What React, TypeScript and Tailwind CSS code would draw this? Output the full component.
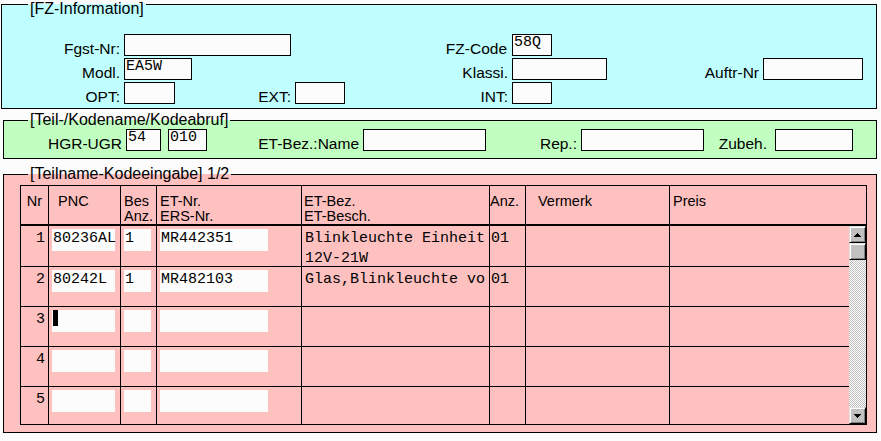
import type { ReactNode } from "react";

const SANS = "font-['Liberation_Sans',Arial,sans-serif]";
const MONO = "font-['Liberation_Mono','Courier_New',monospace]";
const COLS = "grid grid-cols-[27px_72px_36px_145px_188px_36px_144px_197px]";

const Label = ({ w, children, pr = "pr-[4px]" }: { w: string; children: ReactNode; pr?: string }) => (
  <div className={`${w} ${pr} shrink-0 text-right text-[15.5px] leading-none whitespace-nowrap`}>{children}</div>
);

const Box = ({ w, children }: { w: string; children?: ReactNode }) => (
  <div className={`${w} h-[22px] shrink-0 border border-black bg-[#fcfcfc] pl-[1px] ${MONO} text-[15px] leading-[16px]`}>
    {children}
  </div>
);

const Arrow = ({ down }: { down?: boolean }) => (
  <svg width="7" height="4" viewBox="0 0 7 4" shapeRendering="crispEdges">
    <polygon points={down ? "0,0 7,0 3.5,4" : "3.5,0 7,4 0,4"} fill="#000" />
  </svg>
);

const ScrollButton = ({ children }: { children?: ReactNode }) => (
  <div className="h-[17px] shrink-0 flex items-center justify-center bg-[#c0c0c0] border border-t-[#e0e0e0] border-l-[#e0e0e0] border-r-black border-b-black shadow-[inset_1px_1px_0_#ffffff,inset_-1px_-1px_0_#808080]">
    {children}
  </div>
);

const rows = [
  { nr: 1, pnc: "80236AL", bes: "1", et: "MR442351", bez: ["Blinkleuchte Einheit", "12V-21W"], anz: "01", h: "h-[41px] border-b" },
  { nr: 2, pnc: "80242L", bes: "1", et: "MR482103", bez: ["Glas,Blinkleuchte vo"], anz: "01", h: "h-[40px] border-b" },
  { nr: 3, caret: true, h: "h-[40px] border-b" },
  { nr: 4, h: "h-[40px] border-b" },
  { nr: 5, h: "h-[37px]" },
];

const Input = ({ w, children }: { w: string; children?: ReactNode }) => (
  <div className={`${w} h-[22px] mt-[3px] bg-[#fcfcfc] pl-[1px] ${MONO} text-[15px] leading-[20px] whitespace-nowrap`}>
    {children}
  </div>
);

export default function App() {
  return (
    <div className={`w-[881px] h-[441px] overflow-hidden bg-[#fcfcfc] pt-[4px] text-black ${SANS}`}>
      {/* FZ-Information */}
      <div className="relative ml-[1px] w-[876px] h-[105px] border border-black bg-[#c0ffff] pt-[29px] flex flex-col gap-[2px]">
        <span className="absolute left-[26px] top-[-4px] px-[2px] text-[16px] leading-none bg-[linear-gradient(to_bottom,#fcfcfc_3px,#c0ffff_3px)]">
          [FZ-Information]
        </span>
        <div className="flex items-end h-[22px]">
          <Label w="w-[122px]">Fgst-Nr:</Label>
          <Box w="w-[167px]" />
          <Label w="w-[221px]" pr="pr-[5px]">FZ-Code</Label>
          <Box w="w-[40px]">58Q</Box>
        </div>
        <div className="flex items-end h-[22px]">
          <Label w="w-[122px]">Modl.</Label>
          <Box w="w-[68px]">EA5W</Box>
          <Label w="w-[320px]">Klassi.</Label>
          <Box w="w-[95px]" />
          <Label w="w-[156px]">Auftr-Nr</Label>
          <Box w="w-[100px]" />
        </div>
        <div className="flex items-end h-[22px]">
          <Label w="w-[122px]">OPT:</Label>
          <Box w="w-[51px]" />
          <Label w="w-[120px]">EXT:</Label>
          <Box w="w-[50px]" />
          <Label w="w-[167px]">INT:</Label>
          <Box w="w-[40px]" />
        </div>
      </div>

      {/* Teil-/Kodename/Kodeabruf */}
      <div className="relative ml-[3px] mt-[11px] w-[874px] h-[39px] border border-black bg-[#c0ffc0] pt-[8px]">
        <span className="absolute left-[24px] top-[-9px] px-[2px] text-[16px] leading-none bg-[linear-gradient(to_bottom,#fcfcfc_8px,#c0ffc0_8px)]">
          [Teil-/Kodename/Kodeabruf]
        </span>
        <div className="flex items-end h-[22px]">
          <Label w="w-[122px]">HGR-UGR</Label>
          <Box w="w-[35px]">54</Box>
          <div className="w-[7px] shrink-0" />
          <Box w="w-[39px]">010</Box>
          <Label w="w-[156px]">ET-Bez.:Name</Label>
          <Box w="w-[123px]" />
          <Label w="w-[95px]">Rep.:</Label>
          <Box w="w-[123px]" />
          <Label w="w-[71px]" pr="pr-[8px]">Zubeh.</Label>
          <Box w="w-[78px]" />
        </div>
      </div>

      {/* Teilname-Kodeeingabe */}
      <div className="relative ml-[3px] mt-[15px] w-[874px] h-[259px] border border-black bg-[#ffc0c0] pt-[10px] pl-[16px]">
        <span className="absolute left-[24px] top-[-9px] px-[2px] text-[16px] leading-none bg-[linear-gradient(to_bottom,#fcfcfc_8px,#ffc0c0_8px)]">
          [Teilname-Kodeeingabe] 1/2
        </span>
        <div className="relative w-[847px] border border-black">
          <div className={`${COLS} h-[40px] border-b-2 border-black text-[14.5px] leading-[15px]`}>
            <div className="pt-[8px] text-center">Nr</div>
            <div className="border-l border-black pt-[8px] pl-[9px]">PNC</div>
            <div className="border-l border-black pt-[8px] pl-[3px]">Bes<br />Anz.</div>
            <div className="border-l border-black pt-[8px] pl-[3px]">ET-Nr.<br />ERS-Nr.</div>
            <div className="border-l border-black pt-[8px] pl-[2px]">ET-Bez.<br />ET-Besch.</div>
            <div className="border-l border-black pt-[8px]">Anz.</div>
            <div className="border-l border-black pt-[8px] pl-[12px]">Vermerk</div>
            <div className="border-l border-black pt-[8px] pl-[3px]">Preis</div>
          </div>
          {rows.map((r) => (
            <div key={r.nr} className={`${COLS} ${r.h} border-black ${MONO} text-[15px] leading-[20px]`}>
              <div className="pt-[3px] pr-[3px] text-right">{r.nr}</div>
              <div className="border-l border-black pl-[3px]">
                <Input w="w-[63px]">
                  {r.caret ? <div className="w-[5px] h-[16px] bg-black" /> : r.pnc}
                </Input>
              </div>
              <div className="border-l border-black pl-[3px]">
                <Input w="w-[27px]">{r.bes}</Input>
              </div>
              <div className="border-l border-black pl-[3px]">
                <Input w="w-[108px]">{r.et}</Input>
              </div>
              <div className="border-l border-black pt-[3px] pl-[3px] whitespace-nowrap overflow-hidden">
                {r.bez?.map((line) => (
                  <div key={line}>{line}</div>
                ))}
              </div>
              <div className="border-l border-black pt-[3px] pl-[1px]">{r.anz}</div>
              <div className="border-l border-black" />
              <div className="border-l border-black" />
            </div>
          ))}

          {/* scrollbar */}
          <div className="absolute right-0 top-[40px] bottom-0 w-[17px] flex flex-col">
            <ScrollButton>
              <Arrow />
            </ScrollButton>
            <ScrollButton />
            <div className="flex-1 bg-[image:repeating-conic-gradient(#c0c0c0_0%_25%,#ffffff_0%_50%)] bg-[length:2px_2px]" />
            <ScrollButton>
              <Arrow down />
            </ScrollButton>
          </div>
        </div>
      </div>
    </div>
  );
}
